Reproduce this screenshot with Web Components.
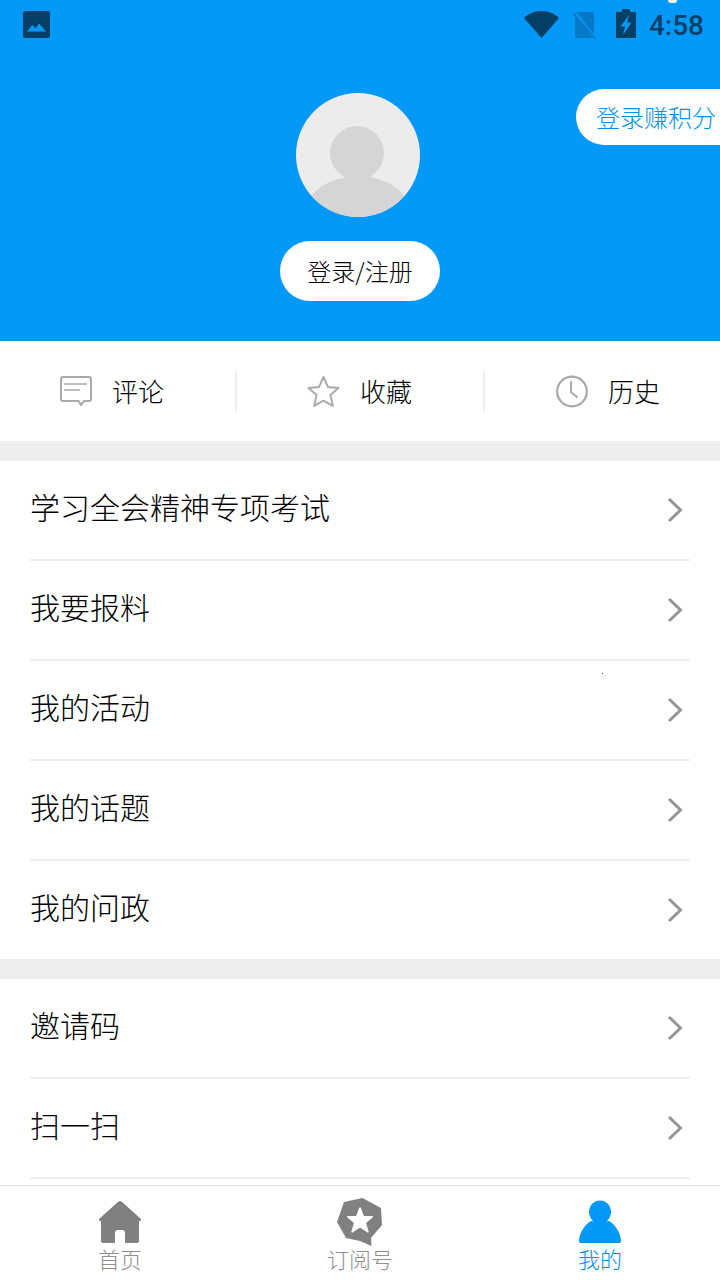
<!DOCTYPE html>
<html lang="zh">
<head>
<meta charset="utf-8">
<title>我的</title>
<style>
  html, body { margin: 0; padding: 0; }
  body { width: 720px; height: 1280px; overflow: hidden; background: #fff; font-family: "Noto Sans CJK SC", "Noto Sans", sans-serif; font-weight: 300; }
</style>
</head>
<body>
<mine-page></mine-page>

<script>
const ICONS = {
  comment: `<svg width="32" height="30" viewBox="0 0 32 30" fill="none" stroke="#a9a9a9" stroke-width="2"><path d="M3 1h26a2 2 0 0 1 2 2v20a2 2 0 0 1-2 2h-5l-3 4-2.500-4H3a2 2 0 0 1-2-2V3a2 2 0 0 1 2-2z"/><path d="M4 8h23M4 14h16" stroke-width="1.600"/></svg>`,
  star: `<svg width="33" height="33" viewBox="0 0 34 33" fill="none" stroke="#a9a9a9" stroke-width="2" stroke-linejoin="round"><path d="M17 1.500l4.500 10.300 11 1-8.400 7.300 2.600 11.200L17 26l-9.700 5.300 2.600-11.200-8.400-7.300 11-1z"/></svg>`,
  clock: `<svg width="32" height="33" viewBox="0 0 32 33" fill="none" stroke="#a9a9a9"><circle cx="16" cy="16.500" r="14.800" stroke-width="2.200"/><path d="M15 7v10l6 5" stroke-width="2" stroke-linecap="round"/></svg>`,
  home: `<svg width="44" height="44" viewBox="0 0 44 44" fill="#808080"><path d="M22 1c.8 0 1.500.5 2 1l18.500 16.500c1 1.500.5 2.500-1 2.500H41v20a2 2 0 0 1-2 2H27V33a3 3 0 0 0-3-3h-4a3 3 0 0 0-3 3v10H5a2 2 0 0 1-2-2V21h-.5c-1.500 0-2-1-1-2.500L20 2c.5-.5 1.200-1 2-1z"/></svg>`,
  subscribe: `<svg width="48" height="50" viewBox="0 0 48 50"><path fill="#808080" d="M26.500 1L45 11l1 17-11 13 .5 8L24 44l-14-3-9-16L8 5z"/><path fill="#fff" stroke="#fff" stroke-width="1.500" stroke-linejoin="round" d="M24 11l3.300 8.500 9 .3-7 5.900 2.600 9.200-7.900-5.300-7.900 5.300 2.600-9.200-7-5.900 9-.3z"/></svg>`,
  user: `<svg width="44" height="44" viewBox="0 0 44 44" fill="#0499f9"><ellipse cx="22" cy="12" rx="11" ry="11.500"/><path d="M13 21c4 1 14 1 18 0 7 4 12 13 12 20 0 1.500-1 2-2 2H3c-1 0-2-.5-2-2 0-7 5-16 12-20z"/></svg>`
};

// base for the small elements: opens the shadow root
class Base extends HTMLElement {
  constructor() {
    super();
    this.shadow = this.attachShadow({ mode: 'open' });
  }
}

class StatusBar extends Base {
  connectedCallback() {
    this.shadow.innerHTML = /*html*/`
      <style>
        :host { display: flex; align-items: center; height: 50px; padding: 0 16px 0 23px; color: #043f66; position: relative; }
        .right { margin-left: auto; display: flex; align-items: center; }
        svg { display: block; }
        .pic { margin-bottom: 2px; }
        .wifi { margin: 0 14px 1px 0; }
        .sim { margin: 0 19px 1px 0; }
        .bat { margin: 0 13px 3px 0; }
        .time { font: 500 28px Roboto, sans-serif; }
        /* bottom of something cut off by the top edge of the screen */
        .cut { position: absolute; left: 668px; top: 0; width: 9px; height: 3px; background: #fff; border-radius: 0 0 5px 5px; }
      </style>
      <span class="cut"></span>
      <svg class="pic" width="27" height="27" viewBox="0 0 27 27"><rect width="27" height="27" rx="2.500" fill="#043f66"/><path fill="#0499f9" d="M4 20.500l5.500-6.500 3 3.500 3.500-5 7 8z"/></svg>
      <div class="right">
        <svg class="wifi" width="35" height="27" viewBox="0 0 35 27"><path fill="#043f66" d="M17.500 27L0 7C4 2.800 10.500 0 17.500 0S31 2.800 35 7z"/></svg>
        <svg class="sim" width="24" height="28" viewBox="0 0 24 28"><path fill="#0679c4" d="M2 3a2 2 0 0 1 2-2h15a2 2 0 0 1 2 2v22a2 2 0 0 1-2 2H4a2 2 0 0 1-2-2z"/><path stroke="#0499f9" stroke-width="3" d="M1 1l22 27"/><path stroke="#0679c4" stroke-width="1.500" d="M0 2l23 26"/></svg>
        <svg class="bat" width="20" height="29" viewBox="0 0 20 29"><path fill="#043f66" d="M6 0h8v3h6v26H0V3h6z"/><path fill="#0499f9" d="M13 6L4.500 17.500H9L7 26l8.500-12.500H11z"/></svg>
        <span class="time">4:58</span>
      </div>`;
  }
}

class ProfileHeader extends Base {
  connectedCallback() {
    this.shadow.innerHTML = /*html*/`
      <style>
        :host { display: flex; flex-direction: column; align-items: center; height: 341px; background: #0499f9; position: relative; }
        status-bar { align-self: stretch; }
        .avatar { display: block; margin: 43px 4px 0 0; }
        .login { margin-top: 24px; width: 160px; height: 60px; border-radius: 30px; background: #fff; color: #000; font-size: 24px; line-height: 60px; text-align: center; }
        .points { position: absolute; right: 0; top: 89px; width: 124px; height: 56px; padding-left: 20px; border-radius: 28px 0 0 28px; background: #fff; color: #0090ee; font-size: 24px; line-height: 56px; white-space: nowrap; }
      </style>
      <status-bar></status-bar>
      <svg class="avatar" width="124" height="124" viewBox="0 0 124 124">
        <circle cx="62" cy="62" r="62" fill="#ececec"/>
        <clipPath id="c"><circle cx="62" cy="62" r="62"/></clipPath>
        <g clip-path="url(#c)" fill="#d5d5d5">
          <circle cx="61" cy="60" r="27"/>
          <ellipse cx="62" cy="125" rx="55" ry="42"/>
        </g>
      </svg>
      <div class="login">登录/注册</div>
      <div class="points">登录赚积分</div>`;
  }
}

class StatItem extends Base {
  connectedCallback() {
    this.shadow.innerHTML = /*html*/`
      <style>
        :host { display: flex; align-items: center; gap: 20px; font-size: 26px; color: #000; padding-left: 70px; }
        :host(:first-child) { padding-left: 60px; }
        :host(:last-child) { padding-left: 71px; }
        ::slotted(span) { display: flex; }
        .label { padding-bottom: 2px; }
      </style>
      <slot name="icon"></slot><div class="label"><slot></slot></div>`;
  }
}

class StatSep extends Base {
  connectedCallback() {
    this.shadow.innerHTML = `<style>:host { display: block; width: 2px; height: 40px; background: #eee; }</style>`;
  }
}

class StatsRow extends Base {
  connectedCallback() {
    this.shadow.innerHTML = /*html*/`
      <style>
        :host { display: grid; grid-template-columns: 235px 2px 246px 2px 1fr; align-items: center; height: 100px; background: #fff; }
      </style>
      <slot></slot>`;
  }
}

class MenuRow extends Base {
  connectedCallback() {
    this.shadow.innerHTML = /*html*/`
      <style>
        :host { display: block; padding: 0 30px; background: #fff; }
        .row { display: flex; align-items: center; justify-content: space-between; height: 98px; border-bottom: 2px solid #eeeeee; font-size: 30px; color: #000; }
        :host([last]) .row { border-bottom: 0; }
        .label { padding-bottom: 8px; }
        svg { display: block; margin-right: 7px; }
      </style>
      <div class="row">
        <div class="label"><slot></slot></div>
        <svg width="16" height="26" viewBox="0 0 16 26" fill="none" stroke="#959595" stroke-width="3"><path d="M2 2l11.500 11L2 24"/></svg>
      </div>`;
  }
}

class MenuGroup extends Base {
  connectedCallback() {
    this.shadow.innerHTML = `<style>:host { display: block; margin-top: 20px; }</style><slot></slot>`;
  }
}

class TabItem extends Base {
  connectedCallback() {
    this.shadow.innerHTML = /*html*/`
      <style>
        :host { display: flex; flex: 1; flex-direction: column; align-items: center; font-size: 22px; line-height: 28px; color: #8f8f8f; }
        :host([active]) { color: #0090ee; }
        .ic { height: 44px; margin-top: 14px; display: flex; align-items: center; }
        ::slotted(span) { display: flex; }
      </style>
      <div class="ic"><slot name="icon"></slot></div>
      <slot></slot>`;
  }
}

class TabBar extends Base {
  connectedCallback() {
    this.shadow.innerHTML = /*html*/`
      <style>
        :host { display: flex; flex: none; height: 94px; border-top: 1px solid #e2e2e2; background: #fff; }
      </style>
      <slot></slot>`;
  }
}

class MinePage extends Base {
  connectedCallback() {
    this.shadow.innerHTML = /*html*/`
      <style>
        :host { display: flex; flex-direction: column; height: 1280px; background: #eeeeee; position: relative; }
        .scroll { flex: 1; min-height: 0; overflow: hidden; }
        .speck { position: absolute; left: 602px; top: 673px; width: 1px; height: 1px; background: #555; }
      </style>
      <div class="scroll">
        <profile-header></profile-header>
        <stats-row>
          <stat-item><span slot="icon">${ICONS.comment}</span>评论</stat-item>
          <stat-sep></stat-sep>
          <stat-item><span slot="icon">${ICONS.star}</span>收藏</stat-item>
          <stat-sep></stat-sep>
          <stat-item><span slot="icon">${ICONS.clock}</span>历史</stat-item>
        </stats-row>
        <menu-group>
          <menu-row>学习全会精神专项考试</menu-row>
          <menu-row>我要报料</menu-row>
          <menu-row>我的活动</menu-row>
          <menu-row>我的话题</menu-row>
          <menu-row last>我的问政</menu-row>
        </menu-group>
        <menu-group>
          <menu-row>邀请码</menu-row>
          <menu-row>扫一扫</menu-row>
          <menu-row></menu-row>
        </menu-group>
      </div>
      <span class="speck"></span>
      <tab-bar>
        <tab-item><span slot="icon">${ICONS.home}</span>首页</tab-item>
        <tab-item><span slot="icon">${ICONS.subscribe}</span>订阅号</tab-item>
        <tab-item active><span slot="icon">${ICONS.user}</span>我的</tab-item>
      </tab-bar>`;
  }
}

customElements.define('status-bar', StatusBar);
customElements.define('profile-header', ProfileHeader);
customElements.define('stat-item', StatItem);
customElements.define('stat-sep', StatSep);
customElements.define('stats-row', StatsRow);
customElements.define('menu-row', MenuRow);
customElements.define('menu-group', MenuGroup);
customElements.define('tab-item', TabItem);
customElements.define('tab-bar', TabBar);
customElements.define('mine-page', MinePage);
</script>
</body>
</html>
